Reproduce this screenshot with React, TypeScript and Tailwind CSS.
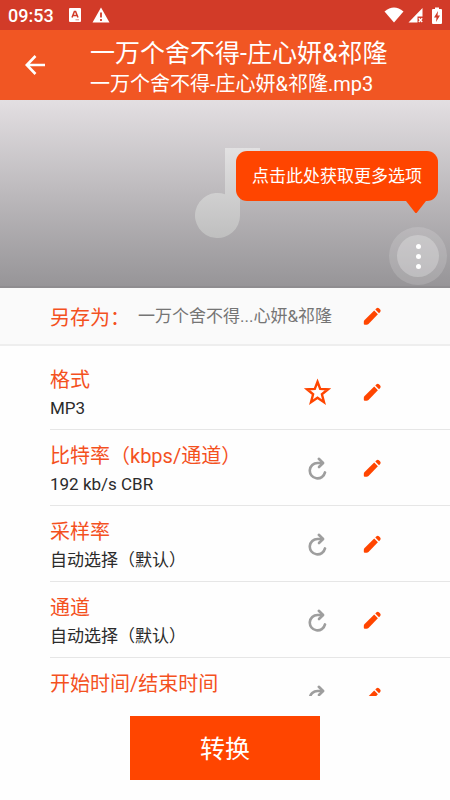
import type { ReactNode } from 'react';

interface Setting {
  label: string;
  value?: string;
  favorite?: boolean;
}

const settings: Setting[] = [
  { label: '格式', value: 'MP3', favorite: true },
  { label: '比特率（kbps/通道）', value: '192 kb/s CBR' },
  { label: '采样率', value: '自动选择（默认）' },
  { label: '通道', value: '自动选择（默认）' },
  { label: '开始时间/结束时间' },
];

function PencilIcon() {
  return (
    <svg viewBox="0 0 24 24" className="size-6" fill="#ff4500" aria-hidden="true">
      <path d="M14.2 6.6 17.9 10.3 8.5 19.9Q7.7 20.7 6.7 20.7H4.8Q3.8 20.7 3.8 19.7V17.9Q3.8 16.9 4.6 16.1Z" />
      <path d="M15.3 5.5 16.5 4.3Q17.7 3.3 18.9 4.3L20.2 5.6Q21.2 6.8 20.2 8L19 9.2Z" />
    </svg>
  );
}

function StarIcon() {
  return (
    <svg viewBox="0 0 28 28" className="size-7" fill="none" stroke="#ff4500" strokeWidth="2.4" aria-hidden="true">
      <path d="M14.5 3.8 17.2 10.9 25 11.3 18.9 16.3 21 24.2 14.5 19.8 8 24.2 10.1 16.3 4 11.3 11.8 10.9Z" />
    </svg>
  );
}

function ResetIcon() {
  return (
    <svg viewBox="0 0 24 24" className="size-6" fill="none" stroke="#9e9e9e" strokeWidth="2.6" strokeLinecap="round" strokeLinejoin="round" aria-hidden="true">
      <path d="M20 16.4A7.7 7.7 0 1 1 12.5 7H17.5" />
      <path d="M13.8 2.8 18.1 7 14 11" />
    </svg>
  );
}

function IconButton({ label, children }: { label: string; children: ReactNode }) {
  return (
    <button type="button" aria-label={label} className="flex size-7 items-center justify-center">
      {children}
    </button>
  );
}

function StatusBar() {
  return (
    <div className="flex h-[30px] shrink-0 items-center bg-[#d23b28] px-2 text-white">
      <span className="pt-0.5 text-lg font-medium">09:53</span>
      <svg viewBox="0 0 14 14" className="ml-3.5 size-3.5" aria-hidden="true">
        <rect x="1" width="12" height="14" rx="1" fill="#fff" />
        <path d="M4 9.5 6.4 3.5H7.6L10 9.5M5 7.6H9" fill="none" stroke="#d23b28" strokeWidth="1.5" />
        <path d="M7.5 11.8H11" stroke="#d23b28" strokeWidth="0.6" />
      </svg>
      <svg viewBox="0 0 18 16" className="ml-2.5 h-4 w-[18px]" aria-hidden="true">
        <path d="M9 0.5 17.5 15.5H0.5Z" fill="#fff" />
        <path d="M9 5.5V10.5M9 12V14" stroke="#d23b28" strokeWidth="1.8" />
      </svg>
      <svg viewBox="0 0 20 16" className="ml-auto h-4 w-5" fill="#fff" aria-hidden="true">
        <path d="M10 15.5 0.5 4.5Q10-3.5 19.5 4.5Z" />
      </svg>
      <svg viewBox="0 0 16 16" className="ml-1 size-4" aria-hidden="true">
        <path d="M14.5 1V9.5H9.5V15.5H0.5Z" fill="#fff" />
        <path d="M10.8 11.2 14.2 15M14.2 11.2 10.8 15" stroke="#fff" strokeWidth="1.3" />
      </svg>
      <svg viewBox="0 0 10 17" className="ml-2 h-[17px] w-2.5" aria-hidden="true">
        <path d="M3 0.5H7V2H9Q10 2 10 3V16Q10 17 9 17H1Q0 17 0 16V3Q0 2 1 2H3Z" fill="#fff" />
        <path d="M6 4 2 10.5H4.5L4 15 8 8.5H5.5Z" fill="#d23b28" />
      </svg>
    </div>
  );
}

function Header() {
  return (
    <header className="flex h-[70px] shrink-0 items-center bg-[#f15623] pl-6 text-white">
      <button type="button" aria-label="返回" className="flex size-6 items-center justify-center">
        <svg viewBox="0 0 24 24" className="size-6" fill="none" stroke="currentColor" strokeWidth="2.6" aria-hidden="true">
          <path d="M21 12H3M11.5 3 2.8 12 11.5 21" />
        </svg>
      </button>
      <div className="ml-[42px] min-w-0 pt-1.5 whitespace-nowrap">
        <h1 className="text-[25px] leading-8">一万个舍不得-庄心妍&amp;祁隆</h1>
        <p className="text-xl leading-7">一万个舍不得-庄心妍&amp;祁隆.mp3</p>
      </div>
    </header>
  );
}

function Artwork() {
  return (
    <section className="relative flex h-[188px] shrink-0 items-center justify-center border-b-2 border-[#8f8d90] bg-linear-to-b from-[#e3dfe2] to-[#979598]">
      <svg viewBox="0 0 70 90" className="h-[90px] w-[70px]" aria-hidden="true">
        <defs>
          <linearGradient id="note" x1="0" y1="0" x2="0" y2="90" gradientUnits="userSpaceOnUse">
            <stop offset="0" stopColor="#e2e1e2" />
            <stop offset="1" stopColor="#bfbfbf" />
          </linearGradient>
        </defs>
        <path d="M35 0H70V20H50V67.5A22.5 22.5 0 1 1 35 46.3Z" fill="url(#note)" />
      </svg>
      <div className="absolute top-[51px] right-3 rounded-[11px] bg-[#ff4500] px-4 py-[11px] text-[17px] leading-7 text-white">
        点击此处获取更多选项
        <svg viewBox="0 0 20 13" className="absolute top-full right-3 h-[13px] w-5" fill="#ff4500" aria-hidden="true">
          <path d="M0 0H20L11 11.5Q10 12.5 9 11.5Z" />
        </svg>
      </div>
      <button
        type="button"
        aria-label="更多选项"
        className="absolute right-[3px] bottom-px flex size-[58px] items-center justify-center rounded-full bg-white/15"
      >
        <span className="flex size-[42px] flex-col items-center justify-center gap-[5px] rounded-full bg-white/25">
          <span className="size-[5px] rounded-full bg-white" />
          <span className="size-[5px] rounded-full bg-white" />
          <span className="size-[5px] rounded-full bg-white" />
        </span>
      </button>
    </section>
  );
}

function SettingRow({ label, value, favorite }: Setting) {
  return (
    <li className="ml-[50px] flex h-[76px] items-center border-b border-[#e6e6e6] pr-16">
      <div className="h-[60px] min-w-0 flex-1 pt-1 whitespace-nowrap">
        <h2 className="text-xl leading-7 text-[#f4511e]">{label}</h2>
        {value && <p className="text-[17px] leading-7 text-[#2b2b2b]">{value}</p>}
      </div>
      <div className="flex gap-[27px]">
        <IconButton label={favorite ? '收藏' : '重置'}>{favorite ? <StarIcon /> : <ResetIcon />}</IconButton>
        <IconButton label={`编辑${label}`}>
          <PencilIcon />
        </IconButton>
      </div>
    </li>
  );
}

export default function App() {
  return (
    <div
      lang="zh-CN"
      className="flex h-screen flex-col overflow-hidden bg-[#fefefe] font-[Roboto,'Noto_Sans_CJK_SC',sans-serif]"
    >
      <StatusBar />
      <Header />
      <Artwork />
      <div className="flex h-[58px] shrink-0 items-center border-b-2 border-[#eeeeee] bg-[#fafafa] pr-16 pl-[50px] whitespace-nowrap">
        <span className="pt-1 text-xl text-[#f4511e]">另存为：</span>
        <span className="ml-2 flex-1 pt-0.5 text-[17px] text-[#757575]">一万个舍不得...心妍&amp;祁隆</span>
        <IconButton label="编辑文件名">
          <PencilIcon />
        </IconButton>
      </div>
      <ul className="min-h-0 flex-1 overflow-hidden pt-2">
        {settings.map((setting) => (
          <SettingRow key={setting.label} {...setting} />
        ))}
      </ul>
      <footer className="flex shrink-0 justify-center py-5">
        <button type="button" className="h-16 w-[190px] bg-[#ff4500] pt-1 text-[25px] text-white">
          转换
        </button>
      </footer>
    </div>
  );
}
